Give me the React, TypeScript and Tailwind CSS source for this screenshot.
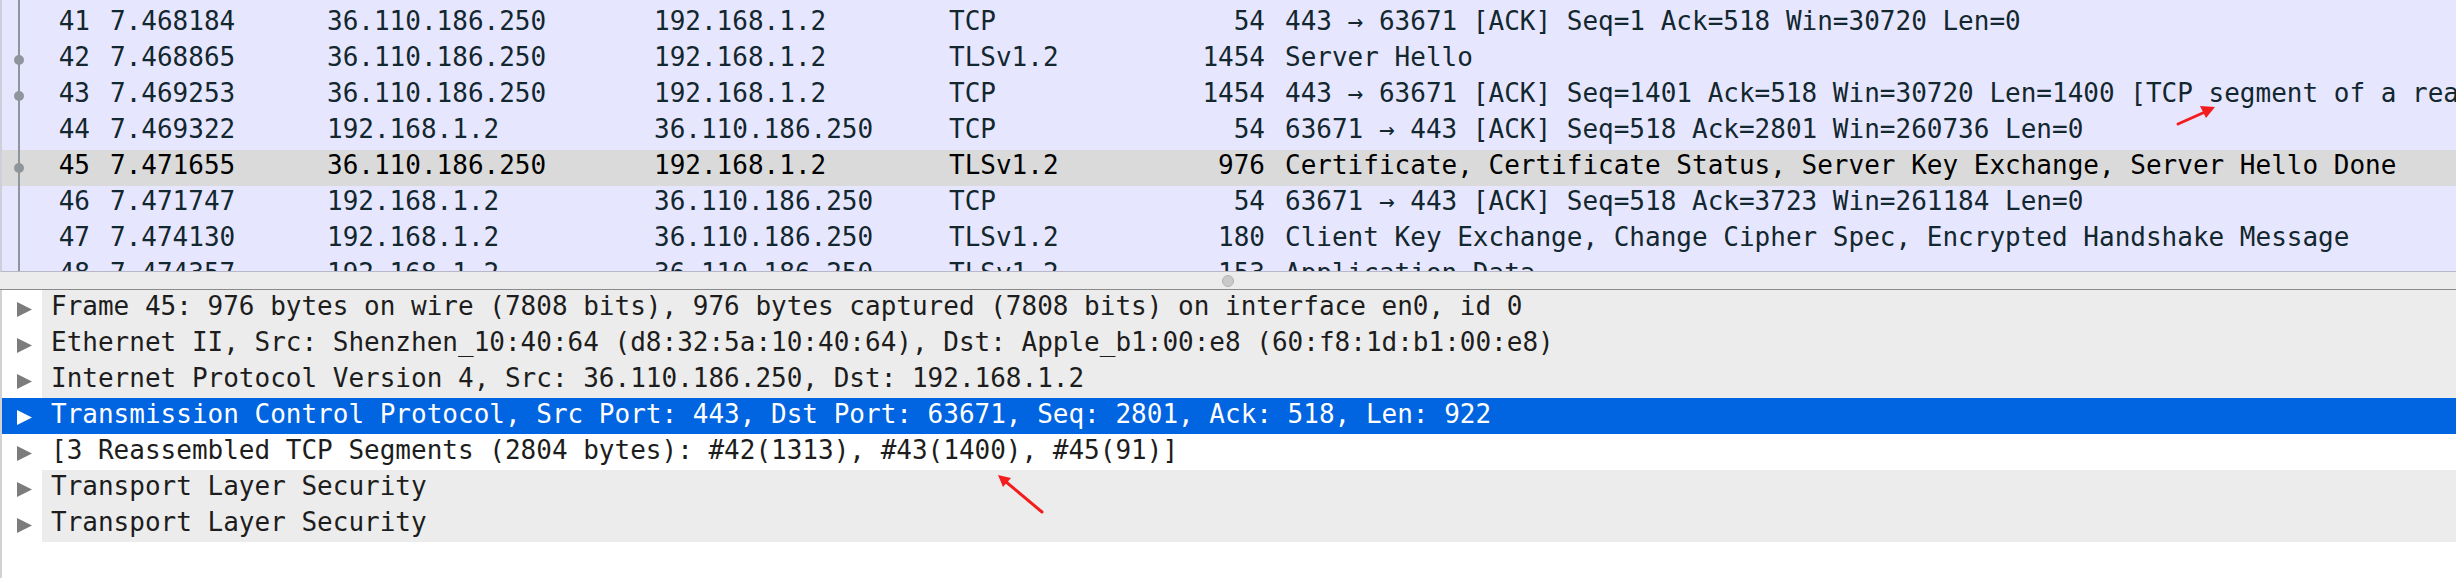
import React from "react";

type Packet = {
  no: number;
  time: string;
  src: string;
  dst: string;
  proto: string;
  len: number;
  info: string;
  dot?: boolean;
  selected?: boolean;
};

const packets: Packet[] = [
  { no: 41, time: "7.468184", src: "36.110.186.250", dst: "192.168.1.2", proto: "TCP", len: 54, info: "443 → 63671 [ACK] Seq=1 Ack=518 Win=30720 Len=0" },
  { no: 42, time: "7.468865", src: "36.110.186.250", dst: "192.168.1.2", proto: "TLSv1.2", len: 1454, info: "Server Hello", dot: true },
  { no: 43, time: "7.469253", src: "36.110.186.250", dst: "192.168.1.2", proto: "TCP", len: 1454, info: "443 → 63671 [ACK] Seq=1401 Ack=518 Win=30720 Len=1400 [TCP segment of a reassembled PDU]", dot: true },
  { no: 44, time: "7.469322", src: "192.168.1.2", dst: "36.110.186.250", proto: "TCP", len: 54, info: "63671 → 443 [ACK] Seq=518 Ack=2801 Win=260736 Len=0" },
  { no: 45, time: "7.471655", src: "36.110.186.250", dst: "192.168.1.2", proto: "TLSv1.2", len: 976, info: "Certificate, Certificate Status, Server Key Exchange, Server Hello Done", dot: true, selected: true },
  { no: 46, time: "7.471747", src: "192.168.1.2", dst: "36.110.186.250", proto: "TCP", len: 54, info: "63671 → 443 [ACK] Seq=518 Ack=3723 Win=261184 Len=0" },
  { no: 47, time: "7.474130", src: "192.168.1.2", dst: "36.110.186.250", proto: "TLSv1.2", len: 180, info: "Client Key Exchange, Change Cipher Spec, Encrypted Handshake Message" },
  { no: 48, time: "7.474357", src: "192.168.1.2", dst: "36.110.186.250", proto: "TLSv1.2", len: 153, info: "Application Data" },
];

type Node = { text: string; kind: "gray" | "blue" | "white" };

const tree: Node[] = [
  { text: "Frame 45: 976 bytes on wire (7808 bits), 976 bytes captured (7808 bits) on interface en0, id 0", kind: "gray" },
  { text: "Ethernet II, Src: Shenzhen_10:40:64 (d8:32:5a:10:40:64), Dst: Apple_b1:00:e8 (60:f8:1d:b1:00:e8)", kind: "gray" },
  { text: "Internet Protocol Version 4, Src: 36.110.186.250, Dst: 192.168.1.2", kind: "gray" },
  { text: "Transmission Control Protocol, Src Port: 443, Dst Port: 63671, Seq: 2801, Ack: 518, Len: 922", kind: "blue" },
  { text: "[3 Reassembled TCP Segments (2804 bytes): #42(1313), #43(1400), #45(91)]", kind: "white" },
  { text: "Transport Layer Security", kind: "gray" },
  { text: "Transport Layer Security", kind: "gray" },
];

function PacketRow({ p }: { p: Packet }) {
  return (
    <div
      className={
        "flex h-[36px] shrink-0 items-start whitespace-nowrap leading-[30px] " +
        (p.selected ? "bg-[#dadada] text-[#000000]" : "bg-[#e7e6ff] text-[#12272e]")
      }
    >
      <div className="relative h-full w-[88px] shrink-0 text-right">
        <div className="absolute left-[16px] top-0 bottom-0 w-[2px] bg-[#8f969b]" />
        {p.dot && <div className="absolute left-[12px] top-[13px] h-[10px] w-[10px] rounded-full bg-[#8f969b]" />}
        <span>{p.no}</span>
      </div>
      <div className="ml-[20px] w-[217px] shrink-0">{p.time}</div>
      <div className="w-[327px] shrink-0">{p.src}</div>
      <div className="w-[295px] shrink-0">{p.dst}</div>
      <div className="w-[150px] shrink-0">{p.proto}</div>
      <div className="w-[166px] shrink-0 text-right">{p.len}</div>
      <div className="ml-[20px] min-w-0 flex-1 overflow-hidden">{p.info}</div>
    </div>
  );
}

function TreeRow({ n }: { n: Node }) {
  const blue = n.kind === "blue";
  const rowBg = blue ? "bg-[#0164e1]" : n.kind === "white" ? "bg-white" : "bg-[#ececec]";
  return (
    <div className={"flex h-[36px] shrink-0 whitespace-nowrap " + (blue ? "bg-[#0164e1]" : "bg-white")}>
      <div className="flex w-[40px] shrink-0 items-center pl-[15px] pt-[3px]">
        <svg width="15" height="15" viewBox="0 0 15 15">
          <polygon points="0,0 15,7.5 0,15" fill={blue ? "#ffffff" : "#7c7c7c"} />
        </svg>
      </div>
      <div
        className={
          "min-w-0 flex-1 overflow-hidden pl-[9px] leading-[32px] " +
          rowBg +
          (blue ? " text-white" : " text-[#1d1d1d]")
        }
      >
        {n.text}
      </div>
    </div>
  );
}

export default function App() {
  return (
    <div
      className="relative h-[578px] w-[2456px] overflow-hidden bg-white text-[26px]"
      style={{ fontFamily: '"DejaVu Sans Mono", "Liberation Mono", monospace' }}
    >
      {/* packet list */}
      <div className="flex h-[272px] flex-col overflow-hidden border-b border-l-2 border-b-[#b8b8c6] border-l-[#cfcfd9] bg-[#e7e6ff]">
        <div className="relative h-[6px] shrink-0">
          <div className="absolute left-[16px] top-0 bottom-0 w-[2px] bg-[#8f969b]" />
        </div>
        {packets.map((p) => (
          <PacketRow key={p.no} p={p} />
        ))}
      </div>

      {/* splitter */}
      <div className="flex h-[18px] items-center justify-center border-b border-[#8a8a8a] bg-[#ececec]">
        <div className="h-[12px] w-[12px] rounded-full border border-[#b4b4b4] bg-[#c9c9c9]" />
      </div>

      {/* detail tree */}
      <div className="flex h-[288px] flex-col border-l-2 border-[#d2d2d2] bg-white">
        {tree.map((n, i) => (
          <TreeRow key={i} n={n} />
        ))}
      </div>

      {/* red annotation arrows */}
      <svg className="pointer-events-none absolute left-0 top-0" width="2456" height="578">
        <line x1="2178" y1="124" x2="2205" y2="112" stroke="#f31d1d" strokeWidth="3" strokeLinecap="round" />
        <polygon points="2215,107 2200,106 2206,118" fill="#f31d1d" />
        <line x1="1042" y1="512" x2="1005" y2="481" stroke="#f31d1d" strokeWidth="3" strokeLinecap="round" />
        <polygon points="998,475 1011,478 1003,487" fill="#f31d1d" />
      </svg>
    </div>
  );
}
